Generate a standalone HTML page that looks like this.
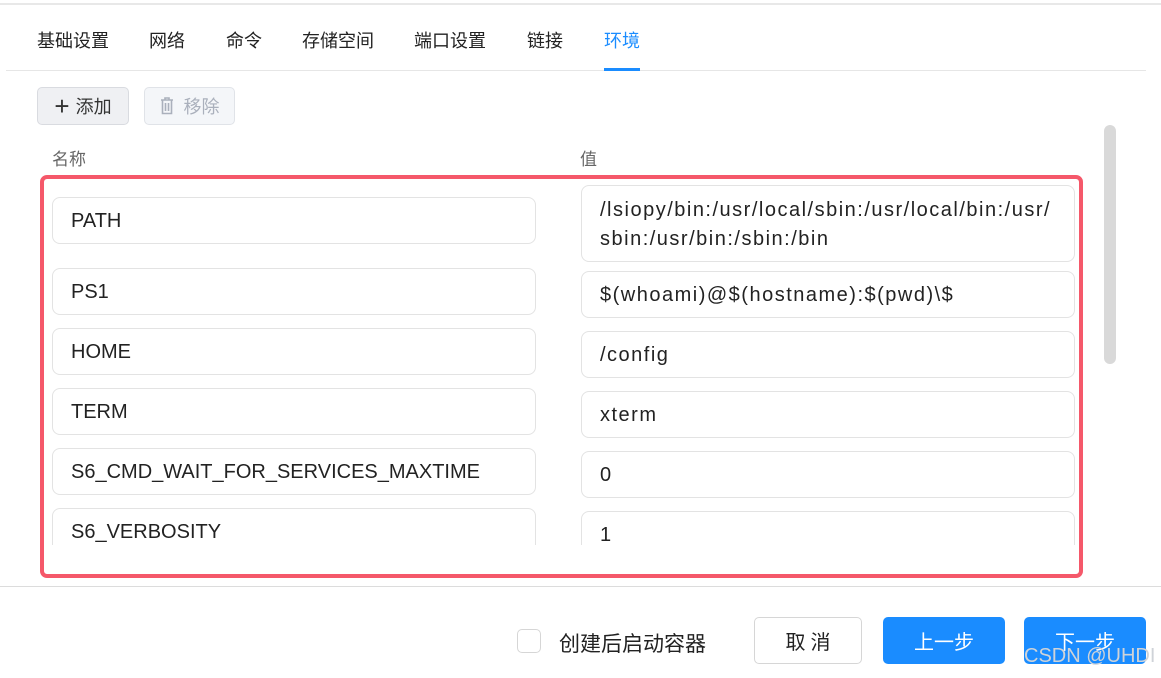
<!DOCTYPE html>
<html><head><meta charset="utf-8"><style>
*{box-sizing:border-box;margin:0;padding:0}
body{width:1161px;height:678px;background:#fff;font-family:"Liberation Sans","Noto Sans CJK SC",sans-serif;color:#222;position:relative;overflow:hidden}
.a{position:absolute}
.tab{position:absolute;top:27px;font-size:18px;color:#222}
.inp{position:absolute;border:1px solid #e3e3e3;border-radius:8px;background:#fff;font-size:20px;color:#222;padding-left:18px;display:flex;align-items:center;line-height:29px;padding-top:2px}
.v{letter-spacing:1.5px}
.btn{position:absolute;border-radius:5px;display:flex;align-items:center;justify-content:center;font-size:20px}
</style></head><body>
<div class="a" style="left:0;top:3px;width:1161px;height:2px;background:#e8e8e8"></div>
<div class="tab" style="left:37px">基础设置</div>
<div class="tab" style="left:149px">网络</div>
<div class="tab" style="left:226px">命令</div>
<div class="tab" style="left:302px">存储空间</div>
<div class="tab" style="left:414px">端口设置</div>
<div class="tab" style="left:527px">链接</div>
<div class="tab" style="left:604px;color:#1a8cff">环境</div>
<div class="a" style="left:6px;top:70px;width:1140px;height:1px;background:#e6e6e6"></div>
<div class="a" style="left:604px;top:68px;width:36px;height:3px;background:#1a8cff"></div>
<div class="btn" style="left:37px;top:87px;width:92px;height:38px;background:#eff0f3;border:1px solid #d9dbe0;color:#333;font-size:18px"><span style="font-size:26px;font-weight:300;margin-right:6px;line-height:1">+</span>添加</div>
<div class="btn" style="left:144px;top:87px;width:91px;height:38px;background:#f4f6f9;border:1px solid #e0e3e8;color:#aab0bc;font-size:18px">
<svg width="14" height="18" viewBox="0 0 14 18" style="margin-right:10px"><path d="M1 3h12M5 3V1h4v2M2.5 3.5v13h9v-13M5.5 6v8M8.5 6v8" fill="none" stroke="#aab0bc" stroke-width="1.6"/></svg>移除</div>
<div class="a" style="left:52px;top:145px;font-size:17px;color:#666">名称</div>
<div class="a" style="left:580px;top:145px;font-size:17px;color:#666">值</div>
<div class="a" style="left:1104px;top:125px;width:12px;height:239px;border-radius:6px;background:#d9d9d9"></div>
<div class="a" style="left:40px;top:175px;width:1043px;height:403px;border:4px solid #f5586a;border-radius:7px"></div>
<div class="a" style="left:44px;top:179px;width:1035px;height:366px;overflow:hidden">
<div class="inp" style="left:8px;top:18px;width:484px;height:47px">PATH</div>
<div class="inp v" style="left:537px;top:6px;width:494px;height:77px">/lsiopy/bin:/usr/local/sbin:/usr/local/bin:/usr/<br>sbin:/usr/bin:/sbin:/bin</div>
<div class="inp" style="left:8px;top:89px;width:484px;height:47px">PS1</div>
<div class="inp v" style="left:537px;top:92px;width:494px;height:47px">$(whoami)@$(hostname):$(pwd)\$</div>
<div class="inp" style="left:8px;top:149px;width:484px;height:47px">HOME</div>
<div class="inp v" style="left:537px;top:152px;width:494px;height:47px">/config</div>
<div class="inp" style="left:8px;top:209px;width:484px;height:47px">TERM</div>
<div class="inp v" style="left:537px;top:212px;width:494px;height:47px">xterm</div>
<div class="inp" style="left:8px;top:269px;width:484px;height:47px">S6_CMD_WAIT_FOR_SERVICES_MAXTIME</div>
<div class="inp v" style="left:537px;top:272px;width:494px;height:47px">0</div>
<div class="inp" style="left:8px;top:329px;width:484px;height:47px">S6_VERBOSITY</div>
<div class="inp v" style="left:537px;top:332px;width:494px;height:47px">1</div>
</div>
<div class="a" style="left:0;top:586px;width:1161px;height:1px;background:#dcdcdc"></div>
<div class="a" style="left:517px;top:629px;width:24px;height:24px;border:1px solid #d6d6d6;border-radius:5px"></div>
<div class="a" style="left:559px;top:628px;font-size:21px">创建后启动容器</div>
<div class="btn" style="left:754px;top:617px;width:108px;height:47px;border:1px solid #d6d6d6;letter-spacing:5px;padding-left:5px">取消</div>
<div class="btn" style="left:883px;top:617px;width:122px;height:47px;background:#1a8cff;color:#fff">上一步</div>
<div class="btn" style="left:1024px;top:617px;width:122px;height:47px;background:#1a8cff;color:#fff">下一步</div>
<div class="a" style="left:1024px;top:645px;font-size:20px;color:#cfd3d8">CSDN @UHDI</div>
</body></html>
